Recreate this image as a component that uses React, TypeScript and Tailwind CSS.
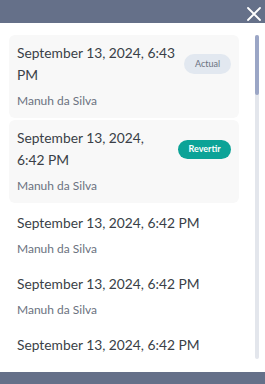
type HistoryItem = {
  id: string;
  date: string;
  author: string;
  status?: "current" | "revert";
};

const items: HistoryItem[] = [
  { id: "1", date: "September 13, 2024, 6:43 PM", author: "Manuh da Silva", status: "current" },
  { id: "2", date: "September 13, 2024, 6:42 PM", author: "Manuh da Silva", status: "revert" },
  { id: "3", date: "September 13, 2024, 6:42 PM", author: "Manuh da Silva" },
  { id: "4", date: "September 13, 2024, 6:42 PM", author: "Manuh da Silva" },
  { id: "5", date: "September 13, 2024, 6:42 PM", author: "Manuh da Silva" },
];

function CloseIcon() {
  return (
    <svg width="14" height="14" viewBox="0 0 14 14" fill="none">
      <path d="M1 1L13 13M13 1L1 13" stroke="white" strokeWidth="1.8" strokeLinecap="round" />
    </svg>
  );
}

export default function App() {
  return (
    <div
      className="flex h-[384px] w-[265px] flex-col bg-[#657089]"
      style={{ fontFamily: "Lato, 'Open Sans', sans-serif" }}
    >
      <div className="flex h-[23px] shrink-0 items-center justify-end pr-[4px] pt-[4px]">
        <CloseIcon />
      </div>

      <div className="flex min-h-0 flex-1 bg-white pb-[13px] pl-[9px] pr-[6px] pt-[12px]">
        <div className="min-w-0 flex-1 overflow-hidden">
          {items.map((item) => {
            const highlighted = item.status !== undefined;
            return (
              <div
                key={item.id}
                className={
                  highlighted
                    ? "mb-[2px] rounded-md bg-[#f8f8f8] px-[8px] pb-[9px] pt-[7px]"
                    : "px-[8px] pb-[9px] pt-[7px]"
                }
              >
                <div className="flex items-center gap-[4px]">
                  <p className="min-w-0 flex-1 text-[13.8px] leading-[22px] text-[#3a3f47]">
                    {item.date}
                  </p>

                  {item.status === "current" ? (
                    <span className="flex h-[20px] w-[47px] shrink-0 items-center justify-center rounded-full bg-[#e2e8f0] text-[9px] text-[#6b7280]">
                      Actual
                    </span>
                  ) : null}

                  {item.status === "revert" ? (
                    <span className="flex h-[19px] w-[53px] shrink-0 items-center justify-center rounded-full bg-[#0ca397] text-[9px] font-bold text-white">
                      Revertir
                    </span>
                  ) : null}
                </div>
                <p className="mt-[7px] text-[12px] leading-[16px] text-[#6b7280]">
                  {item.author}
                </p>
              </div>
            );
          })}
        </div>

        <div className="ml-[16px] flex w-[4px] shrink-0 flex-col rounded-full bg-[#e3e6ec]">
          <div className="h-[60px] rounded-full bg-[#9ba6c6]" />
        </div>
      </div>

      <div className="h-[12px] shrink-0" />
    </div>
  );
}
